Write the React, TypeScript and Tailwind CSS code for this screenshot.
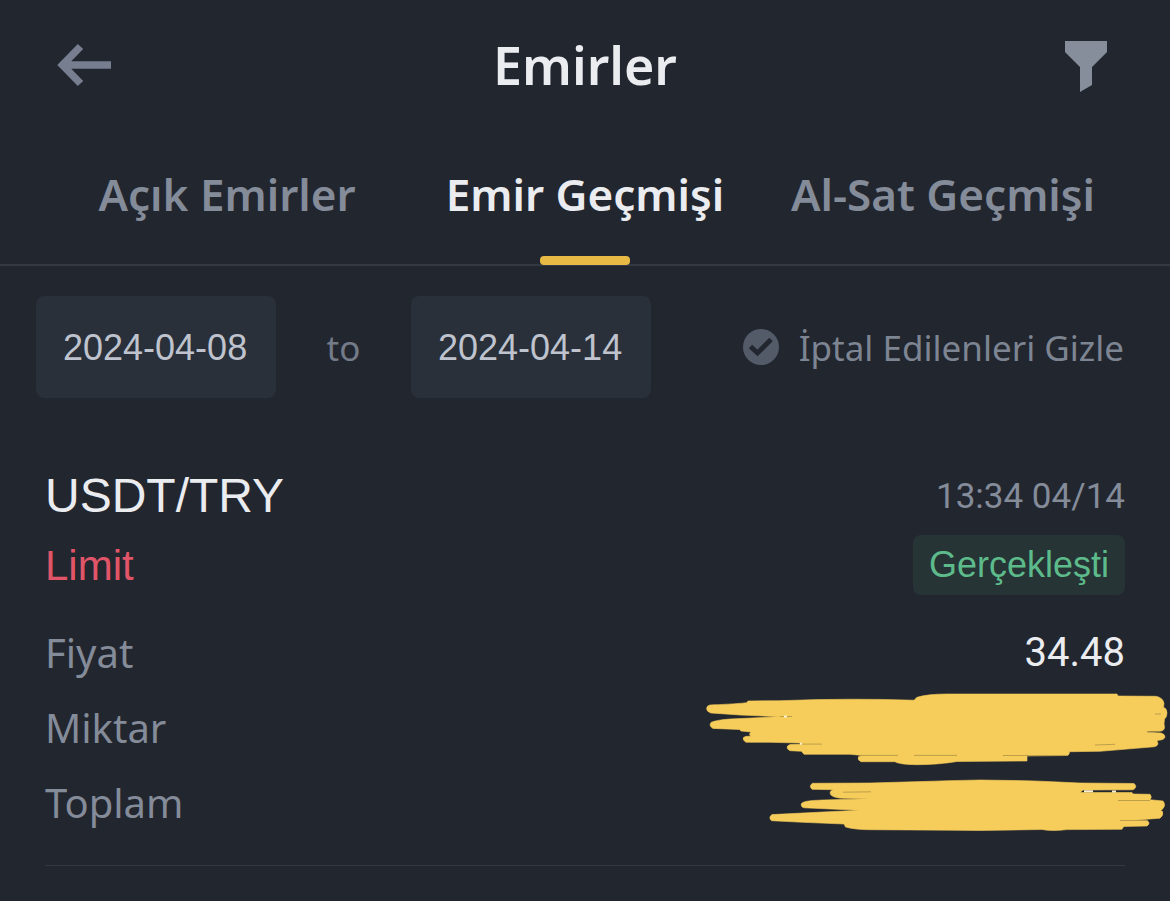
import { useState } from "react";

const TABS = ["Açık Emirler", "Emir Geçmişi", "Al-Sat Geçmişi"];

interface DateFieldProps {
  label: string;
  value: string;
  onChange: (value: string) => void;
}

const DateField = ({ label, value, onChange }: DateFieldProps) => (
  <input
    type="text"
    aria-label={label}
    value={value}
    onChange={(e) => onChange(e.target.value)}
    className="w-60 h-[102px] px-[27px] pt-0.5 rounded-lg bg-[#29303a] text-4xl text-[#bfc3cd] focus:outline-none"
  />
);

const BackIcon = () => (
  <svg className="w-14 h-12" viewBox="0 0 56 48" fill="none" aria-hidden="true">
    <path d="M24.500 5.500 6.500 24l18 18.500M8 24h47" stroke="#777e8f" strokeWidth={7.500} />
  </svg>
);

const FilterIcon = () => (
  <svg className="w-[42px] h-[54px]" viewBox="0 0 42 54" aria-hidden="true">
    <path d="M0 3h42v11L27 29v18l-12 7V29L0 14z" fill="#868d9b" />
  </svg>
);

// Marker strokes that cover the private amounts
const Scribble = () => (
  <svg
    className="absolute -right-[45px] top-0 w-[470px] h-[145px]"
    viewBox="0 0 470 145"
    aria-hidden="true"
  >
    <g fill="#f6cd5b" stroke="#f6cd5b" strokeWidth={0.6} strokeLinejoin="round">
      <path d="M10 15C20 14.5 36 14 46.700 12.700L48 11 80 10.700Q150 8 214 10.200L217 7.300Q228 4 247 4H417L418 6 456 6.300Q463 7.500 464 13.500L463.500 17.300Q467 18.500 467 23 467 27 464.500 29L464 34 464.500 37Q464.500 41 460 41.200H447V42.200L461 43Q465 44 465 47 464.500 50 457 50.500L458 54Q457 56.500 454 56.800L400 61.300 369.500 61.700Q369.500 65 367 65.500L327 66 327 71 257 71.500Q240 74.500 217 74.700 199 74.500 195 71.700H161Q157 70 158.500 66.800L162 65.400 150 64.300H104L101.500 61.300 90 60.700Q86 59 87.500 56L90 54.500 100 54.300V53L70 52.300H46Q42 50 43.500 47.500L46 46.300H50.500L49.500 44 51 42 41 41 39.500 39.500 13 38.400Q8.500 36 11 32.500 16 30 30 29L80 26.700 40 25 11 23Q6 21.500 6.700 18 7 15.500 10 15Z" />
      <path d="M112.500 93.300Q108.500 96 112 99.300L133 99.700Q128.500 101.500 131 105 134 108 143 108.200L170 108.700 123 110Q102 110.500 101.200 114 100.800 117 104 117.800L130 119 160 120.300 123 122 72 124.600Q68 127.500 71.500 130.700L103 132.300 144 134 145.500 137Q155 139.700 170 139.700L250 140.200 280 140.500 342 139.500Q352 141.500 367 139.600L422 139.300Q423 137 424 136.500L447 136Q451 133 447 130.500L437 130 460 128.200Q464 125 462.500 121.500L460.700 120.700Q467 116 463 111L450 109.700Q452.500 107 450 104.300L433 104 432 102.500H380L383 100 433 99.800Q438 97 434 93.500L380 93Q330 90 280 90 240 90.800 230 91.300L170 93Z" />
    </g>
    <path
      d="M80 26.500h12M100 54.100h22M160 65.400h38M214 65.400h43M303 65.500h65M395 55 415 54.300M143 102.200 171 101.800M418 110.500h32M420 130.500h27M455 24h6"
      stroke="#b59a4a"
      strokeWidth={0.9}
      fill="none"
    />
    <path d="M384 101.300h9M412 101.500h4M84 26.400h3M100 53.700h2" stroke="#fbf1d0" strokeWidth={2} fill="none" />
  </svg>
);

export default function App() {
  const [activeTab, setActiveTab] = useState(1);
  const [startDate, setStartDate] = useState("2024-04-08");
  const [endDate, setEndDate] = useState("2024-04-14");
  const [hideCancelled, setHideCancelled] = useState(true);

  return (
    <div className="min-h-screen bg-[#22262f] font-['Liberation_Sans',sans-serif]">
      <header className="grid grid-cols-3 items-center h-[130px] px-14">
        <button type="button" aria-label="Geri" className="justify-self-start">
          <BackIcon />
        </button>
        <h1 className="text-center text-[52px] leading-none font-semibold text-[#eaecf0] font-['Noto_Sans',sans-serif]">
          Emirler
        </h1>
        <button type="button" aria-label="Filtrele" className="justify-self-end pr-[7px]">
          <FilterIcon />
        </button>
      </header>

      <nav className="grid grid-cols-3 h-[136px] px-12 border-b-2 border-[#333842] font-['Noto_Sans',sans-serif]">
        {TABS.map((tab, index) => (
          <button
            key={tab}
            type="button"
            onClick={() => setActiveTab(index)}
            className={
              index === activeTab
                ? "relative pb-1.5 text-[44px] font-semibold whitespace-nowrap text-[#eaecf0]"
                : "relative pb-1.5 text-[44px] font-semibold whitespace-nowrap text-[#848b99]"
            }
          >
            {tab}
            {index === activeTab && (
              <span className="absolute left-1/2 -bottom-px -translate-x-1/2 w-[90px] h-[9px] rounded bg-[#e8b945]" />
            )}
          </button>
        ))}
      </nav>

      {/* Filters */}
      <div className="flex items-center justify-between pt-[30px] pl-9 pr-[46px]">
        <div className="flex items-center">
          <DateField label="Başlangıç tarihi" value={startDate} onChange={setStartDate} />
          <span className="w-[135px] pt-0.5 text-center text-[35px] text-[#747b88] font-['Noto_Sans',sans-serif]">to</span>
          <DateField label="Bitiş tarihi" value={endDate} onChange={setEndDate} />
        </div>
        <label className="flex items-center gap-5 text-[35px] text-[#7d8492] whitespace-nowrap font-['Noto_Sans',sans-serif]">
          <span className="relative w-9 h-9">
            <input
              type="checkbox"
              checked={hideCancelled}
              onChange={(e) => setHideCancelled(e.target.checked)}
              className="block appearance-none w-9 h-9 rounded-full bg-[#535a68]"
            />
            {hideCancelled && (
              <svg className="absolute inset-0 w-9 h-9 pointer-events-none" viewBox="0 0 36 36" fill="none" aria-hidden="true">
                <path d="m7.500 17.500 7 6.500L28 10.500" stroke="#22262f" strokeWidth={4.800} />
              </svg>
            )}
          </span>
          <span className="pt-0.5">İptal Edilenleri Gizle</span>
        </label>
      </div>

      {/* Order */}
      <article className="mx-[45px] pt-[62px] pb-[25px] border-b border-[#333842]">
        <div className="flex items-center justify-between h-[70px]">
          <h2 className="pt-0.5 text-5xl text-[#eaecf0]">USDT/TRY</h2>
          <time className="pt-1 text-[35px] text-[#848b99] font-['Roboto',sans-serif]">13:34 04/14</time>
        </div>
        <div className="flex items-center justify-between h-[70px]">
          <span className="text-[42px] text-[#e05567]">Limit</span>
          <span className="h-[60px] px-4 rounded-lg bg-[#263436] text-4xl leading-[60px] text-[#5dbb8b]">Gerçekleşti</span>
        </div>

        <dl className="pt-[15px] text-[40px] text-[#848b99] font-['Noto_Sans',sans-serif]">
          <div className="flex items-center justify-between h-[75px]">
            <dt>Fiyat</dt>
            <dd className="text-[#eaecf0] font-['Roboto',sans-serif]">34.48</dd>
          </div>
          <div className="relative">
            <dt className="flex items-center h-[75px]">Miktar</dt>
            <dt className="flex items-center h-[75px]">Toplam</dt>
            <Scribble />
          </div>
        </dl>
      </article>
    </div>
  );
}
